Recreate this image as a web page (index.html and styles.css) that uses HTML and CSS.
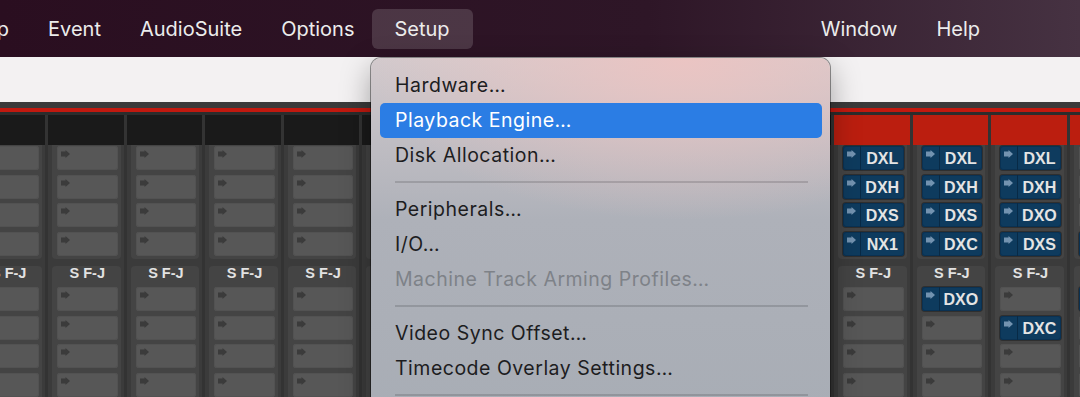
FILE: index.html
```html
<!DOCTYPE html>
<html lang="en">
<head>
  <meta charset="UTF-8">
  <meta name="viewport" content="width=device-width, initial-scale=1.0">
  <title>Setup Menu</title>
  <link rel="stylesheet" href="styles.css">
</head>
<body>
<div class="menubar">
  <span class="menubar-item clipped">Clip</span>
  <span class="menubar-item">Event</span>
  <span class="menubar-item">AudioSuite</span>
  <span class="menubar-item">Options</span>
  <span class="menubar-item active">Setup</span>
  <span class="menubar-spacer"></span>
  <span class="menubar-item">Window</span>
  <span class="menubar-item">Help</span>
</div>
<div class="toolbar"></div>
<div class="mixer">
  <div class="mixer-rule"></div>
  <div class="strips" id="strips"></div>
</div>

<div class="menu">
  <div class="menu-item">Hardware…</div>
  <div class="menu-item selected">Playback Engine…</div>
  <div class="menu-item">Disk Allocation…</div>
  <div class="menu-sep"></div>
  <div class="menu-item">Peripherals…</div>
  <div class="menu-item">I/O…</div>
  <div class="menu-item disabled">Machine Track Arming Profiles…</div>
  <div class="menu-sep"></div>
  <div class="menu-item">Video Sync Offset…</div>
  <div class="menu-item">Timecode Overlay Settings…</div>
  <div class="menu-sep"></div>
</div>

<script>
  const arrow = '<svg viewBox="0 0 9 8" width="9" height="8"><path d="M0 1.6h4.5V0L9 4 4.5 8V6.4H0z"/></svg>';
  const empty = ['', '', '', ''];

  // 15 strips, first one is cut off by the window edge, 6 sit under the menu
  const strips = [];
  for (let i = 0; i < 11; i++) {
    strips.push({ red: false, hidden: i > 4, top: empty, bottom: empty });
  }
  strips.push({ red: true, top: ['DXL', 'DXH', 'DXS', 'NX1'], bottom: empty });
  strips.push({ red: true, top: ['DXL', 'DXH', 'DXS', 'DXC'], bottom: ['DXO', '', '', ''] });
  strips.push({ red: true, top: ['DXL', 'DXH', 'DXO', 'DXS'], bottom: ['', 'DXC', '', ''] });
  strips.push({ red: true, top: ['', '', '', 'DXS'], bottom: ['DXO', '', '', ''] });

  function slot(name) {
    if (!name) {
      return `<div class="slot"><span class="slot-arrow">${arrow}</span></div>`;
    }
    return `<div class="slot on"><span class="slot-arrow">${arrow}</span><span class="slot-name">${name}</span></div>`;
  }

  document.querySelector('#strips').innerHTML = strips.map((s) => `
    <div class="strip">
      <div class="strip-head${s.red ? ' red' : ''}"></div>
      <div class="slot-group first">${s.top.map(slot).join('')}</div>
      <div class="slot-group">
        <div class="group-label">${s.hidden ? '' : 'S F-J'}</div>
        ${s.bottom.map(slot).join('')}
      </div>
    </div>`).join('');
</script>
</body>
</html>
```

FILE: styles.css
```css
body {
  margin: 0;
  width: 1080px;
  height: 397px;
  overflow: hidden;
  position: relative;
  background-color: #3b3b3b;
  font-family: Inter, "Noto Sans", sans-serif;
}

/* top bar */
.menubar {
  height: 57px;
  display: flex;
  align-items: center;
  padding-right: 80.5px;
  background: linear-gradient(90deg, #2a0e20, #2e1627 60%, #463242);
  overflow: hidden;
}

.menubar-item {
  flex: none;
  font-size: 20px;
  color: #ececec;
  padding: 0 19.5px;
  line-height: 40px;
}

.menubar-item.clipped {
  margin-left: -47px;
}

.menubar-item.active {
  padding: 0 23.5px 0 22.5px;
  margin: 0 -3.5px 0 -2px;
  border-radius: 6px;
  background-color: rgba(255, 255, 255, 0.15);
}

.menubar-spacer {
  flex: 1;
}

.toolbar {
  height: 45px;
  background-color: #f3f1f2;
}

/* mixer strips */
.mixer-rule {
  height: 4px;
  border-top: 6px solid #3a3a3a;
  border-bottom: 3px solid #2c2c2c;
  background-color: #c1190f;
}

.strips {
  display: flex;
  margin-left: -33.6px;
}

.strip {
  flex: none;
  width: 78.6px;
  height: 290px;
  box-sizing: border-box;
  border-left: 3px solid #333;
  background-color: #3b3b3b;
}

.strip-head {
  height: 30px;
  background-color: #1a1a1a;
}

.strip-head.red {
  background-color: #bb1e0f;
}

.slot-group {
  display: flex;
  flex-direction: column;
  gap: 4.67px;
  margin: 7px 3px 0 4px;
  padding: 0 3px 3px 5px;
  background-color: #444;
  border-radius: 4px;
}

.slot-group.first {
  margin-top: 0;
  padding-top: 1px;
  border-radius: 0 0 4px 4px;
}

.group-label {
  height: 14px;
  line-height: 14px;
  margin-bottom: 2.33px;
  text-align: center;
  font-family: "Liberation Sans", Arial, sans-serif;
  font-weight: 700;
  font-size: 14.5px;
  color: #e2e2e2;
}

.slot {
  height: 24px;
  display: flex;
  border-radius: 3px;
  background-color: #575757;
  box-shadow: inset 0 0 0 1px #525252;
}

.slot-arrow svg {
  display: block;
  margin: 4px 0 0 4px;
  fill: #3b3b3b;
}

.slot.on {
  background-color: #0e3b5e;
  box-shadow: 0 0 0 1px #2f2f2f, inset 0 0 0 1px #0a3152;
}

.slot.on .slot-arrow {
  width: 17px;
  border-right: 1px solid #082a46;
}

.slot.on .slot-arrow svg {
  fill: #7393b0;
}

.slot-name {
  flex: 1;
  text-align: center;
  line-height: 25px;
  font-family: "Liberation Sans", Arial, sans-serif;
  font-weight: 700;
  font-size: 16px;
  color: #e4e4e4;
}

/* dropdown menu */
.menu {
  position: absolute;
  left: 371px;
  top: 58px;
  width: 459px;
  height: 360px;
  box-sizing: border-box;
  padding-top: 9.5px;
  border-radius: 10px 10px 0 0;
  background:
    radial-gradient(ellipse 70% 45% at 68% 0%, rgba(236, 196, 194, 0.95), rgba(236, 196, 194, 0) 100%),
    linear-gradient(#d2cacd, #aeb1b9 45%, #a8adb5);
  box-shadow: 0 0 0 1px rgba(0, 0, 0, 0.4), 0 10px 30px rgba(0, 0, 0, 0.35);
}

.menu-item {
  height: 35px;
  margin: 0 8px 0 9px;
  padding: 0 15px;
  display: flex;
  align-items: center;
  border-radius: 5px;
  font-size: 19.5px;
  letter-spacing: 0.5px;
  color: #1d1d1f;
}

.menu-item.selected {
  background-color: #2b7de4;
  color: white;
}

.menu-item.disabled {
  color: #7e8288;
}

.menu-sep {
  height: 2px;
  margin: 8.5px 22px 8.5px 24px;
  background-color: rgba(0, 0, 0, 0.14);
}
```
